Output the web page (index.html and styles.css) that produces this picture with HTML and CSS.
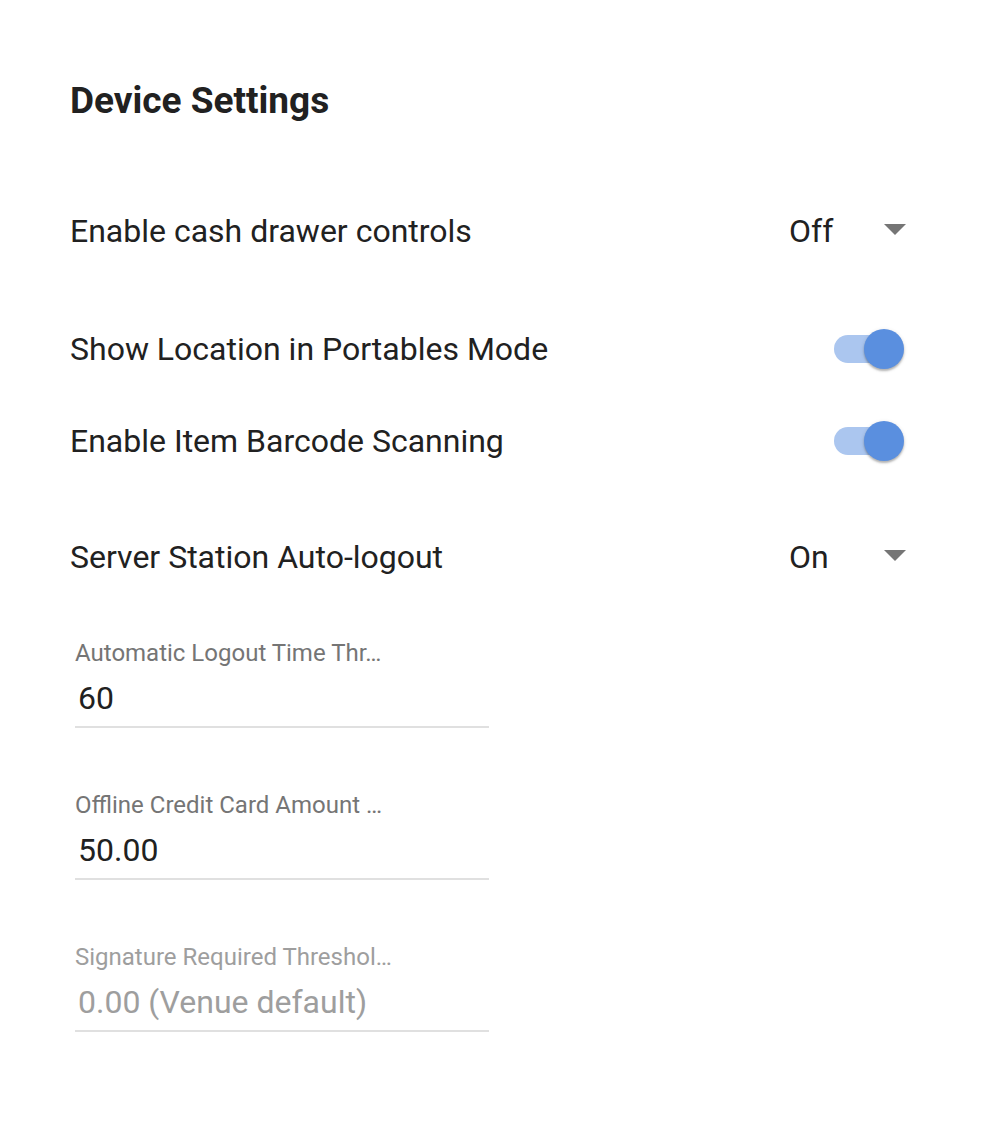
FILE: index.html
```html
<!DOCTYPE html>
<html lang="en">
<head>
  <meta charset="UTF-8" />
  <meta name="viewport" content="width=device-width, initial-scale=1.0"/>
  <title>Device Settings</title>
  <link rel="stylesheet" href="styles.css">
</head>
<body>

  <div class="settings">
    <h1 class="title">Device Settings</h1>

    <div class="row select-row first">
      <span class="row-label">Enable cash drawer controls</span>
      <div class="select">
        <span class="select-value">Off</span>
        <span class="arrow"></span>
      </div>
    </div>

    <div class="toggles">
      <div class="row toggle-row">
        <span class="row-label">Show Location in Portables Mode</span>
        <span class="switch on"><span class="track"></span><span class="thumb"></span></span>
      </div>
      <div class="row toggle-row">
        <span class="row-label">Enable Item Barcode Scanning</span>
        <span class="switch on"><span class="track"></span><span class="thumb"></span></span>
      </div>
    </div>

    <div class="row select-row last">
      <span class="row-label">Server Station Auto-logout</span>
      <div class="select">
        <span class="select-value">On</span>
        <span class="arrow"></span>
      </div>
    </div>

    <div class="fields">
      <div class="field">
        <label class="field-label" title="Automatic Logout Time Threshold">Automatic Logout Time Thr…</label>
        <div class="field-value">60</div>
      </div>
      <div class="field">
        <label class="field-label" title="Offline Credit Card Amount Limit">Offline Credit Card Amount …</label>
        <div class="field-value">50.00</div>
      </div>
      <div class="field disabled">
        <label class="field-label" title="Signature Required Threshold">Signature Required Threshol…</label>
        <div class="field-value">0.00 (Venue default)</div>
      </div>
    </div>
  </div>

</body>
</html>
```

FILE: styles.css
```css
body {
  margin: 0;
  background: #fff;
  font-family: Roboto, "Liberation Sans", Arial, sans-serif;
  color: #212121;
}
.settings {
  padding: 79px 78px 80px 70px;
}
.title {
  margin: 0;
  font-size: 37px;
  line-height: 44px;
  font-weight: 700;
  color: #212121;
}
.row {
  display: flex;
  align-items: center;
  justify-content: space-between;
}
.row-label {
  font-size: 32px;
  line-height: 40px;
}
.select-row { height: 72px; }
.select-row.first { margin-top: 72px; }
.select-row.last { margin-top: 34px; }
.toggles { margin-top: 36px; }
.toggle-row { height: 92px; }

.select {
  width: 117px;
  display: flex;
  align-items: center;
  justify-content: space-between;
}
.select-value {
  font-size: 32px;
  line-height: 40px;
}
.arrow {
  width: 0;
  height: 0;
  border-left: 11px solid transparent;
  border-right: 11px solid transparent;
  border-top: 11px solid #757575;
  margin-top: -4px;
}

.switch {
  position: relative;
  width: 70px;
  height: 40px;
  margin-right: 2px;
}
.switch .track {
  position: absolute;
  left: 0;
  top: 6px;
  width: 64px;
  height: 28px;
  border-radius: 14px;
  background: #abc6ef;
}
.switch .thumb {
  position: absolute;
  right: 0;
  top: 0;
  width: 40px;
  height: 40px;
  border-radius: 50%;
  background: #5a8fdf;
  box-shadow: 0 2px 2px rgba(0,0,0,0.24), 0 1px 4px rgba(0,0,0,0.12);
}

.fields {
  margin-top: 44px;
  margin-left: 5px;
}
.field {
  width: 414px;
  padding-bottom: 8px;
  border-bottom: 2px solid #e0e0e0;
}
.field + .field { margin-top: 61px; }
.field-label {
  display: block;
  font-size: 24px;
  line-height: 32px;
  color: #757575;
  white-space: nowrap;
}
.field-value {
  margin-top: 9px;
  padding-left: 3px;
  font-size: 32px;
  line-height: 40px;
  color: #212121;
}
.field.disabled .field-label,
.field.disabled .field-value {
  color: #9e9e9e;
}
```
